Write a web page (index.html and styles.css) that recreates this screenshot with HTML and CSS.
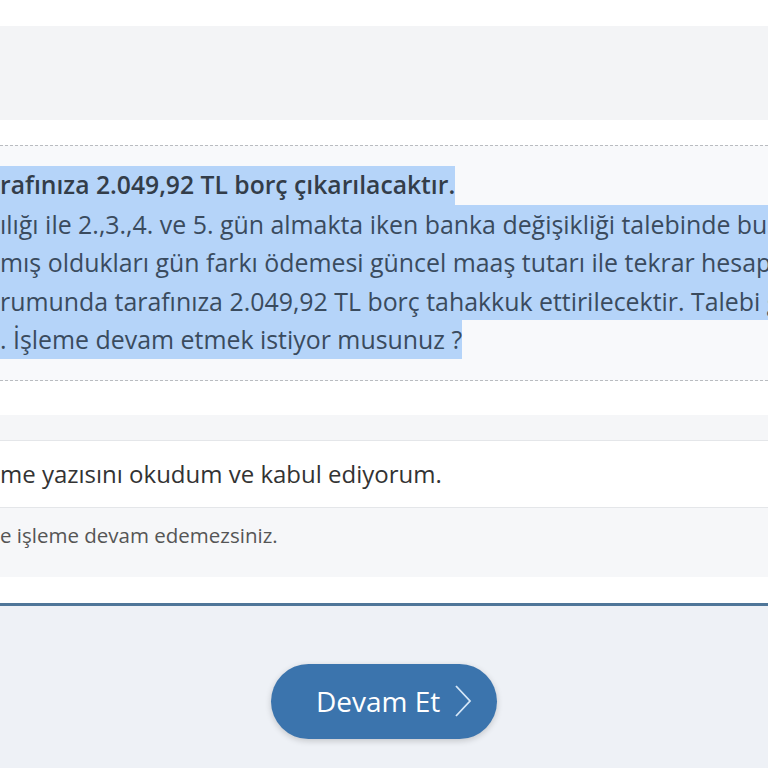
FILE: index.html
```html
<!DOCTYPE html>
<html lang="tr">
<head>
    <meta charset="UTF-8">
    <title>Banka Değişikliği</title>
    <link rel="stylesheet" href="styles.css">
</head>
<body>
<div class="page">
    <div class="top-space"></div>
    <div class="info-band"></div>
    <div class="top-space"></div>

    <div class="notice">
        <div class="line bold"><span class="sel">rafınıza 2.049,92 TL borç çıkarılacaktır.</span></div>
        <div class="line"><span class="sel">ılığı ile 2.,3.,4. ve 5. gün almakta iken banka değişikliği talebinde bulu</span></div>
        <div class="line"><span class="sel">mış oldukları gün farkı ödemesi güncel maaş tutarı ile tekrar hesapla</span></div>
        <div class="line"><span class="sel">rumunda tarafınıza 2.049,92 TL borç tahakkuk ettirilecektir. Talebi ge</span></div>
        <div class="line"><span class="sel">. İşleme devam etmek istiyor musunuz ?</span></div>
    </div>

    <div class="gap"></div>
    <div class="strip"></div>

    <div class="confirm">me yazısını okudum ve kabul ediyorum.</div>
    <div class="hint">e işleme devam edemezsiniz.</div>

    <div class="gap-small"></div>

    <div class="footer">
        <button type="button" class="next-btn">
            <span class="btn-text">Devam Et</span>
            <svg width="18" height="34" viewBox="0 0 18 34" aria-hidden="true">
                <path d="M2 2 L16 17 L2 32" fill="none" stroke="#d6e7f7" stroke-width="1.8"/>
            </svg>
        </button>
    </div>
</div>
</body>
</html>
```

FILE: styles.css
```css
html, body {
    margin: 0;
    padding: 0;
    overflow: hidden;
    background-color: #eef1f6;
}

body {
    font-family: "Open Sans", "Noto Sans", sans-serif;
    color: #3a4b5e;
}

.page {
    width: 768px;
    height: 768px;
    overflow: hidden;
}

.top-space {
    height: 26px;
    background-color: #fff;
}

.info-band {
    height: 94px;
    background-color: #f3f4f6;
}

.notice {
    background-color: #f8f9fb;
    border-top: 1px dashed #b9bcc0;
    border-bottom: 1px dashed #b9bcc0;
    padding: 20px 0 21px;
    margin-top: -1px;
}

.line {
    height: 38.6px;
    line-height: 38.6px;
    font-size: 24.9px;
    white-space: nowrap;
    overflow: hidden;
}

.line.bold {
    font-size: 24.7px;
    font-weight: 600;
    color: #333d49;
}

.sel {
    display: inline-block;
    background-color: #b5d4f9;
}

.gap {
    height: 34px;
    background-color: #fff;
}

.strip {
    height: 25px;
    background-color: #f5f6f8;
    border-bottom: 1px solid #e4e6e9;
}

.confirm {
    height: 66px;
    line-height: 66px;
    font-size: 24px;
    color: #333;
    background-color: #fff;
    border-bottom: 1px solid #e4e6e9;
    white-space: nowrap;
}

.hint {
    height: 69px;
    padding-top: 14px;
    box-sizing: border-box;
    line-height: 26px;
    font-size: 20.5px;
    color: #555;
    background-color: #f6f7f9;
    white-space: nowrap;
}

.gap-small {
    height: 26px;
    background-color: #fff;
    border-bottom: 3px solid #4f7699;
}

.footer {
    display: flex;
    justify-content: center;
    padding-top: 58px;
    background-color: #eef1f6;
}

.next-btn {
    display: flex;
    align-items: center;
    gap: 14px;
    width: 226px;
    height: 75px;
    padding: 0 20px 0 45px;
    border: none;
    border-radius: 38px;
    background-color: #3b74ad;
    color: #fff;
    font-family: "Open Sans", "Noto Sans", sans-serif;
    font-size: 28px;
    white-space: nowrap;
    box-shadow: 0 2px 6px rgba(0, 0, 0, 0.18);
    cursor: pointer;
    box-sizing: border-box;
}

.next-btn svg {
    flex-shrink: 0;
}
```
